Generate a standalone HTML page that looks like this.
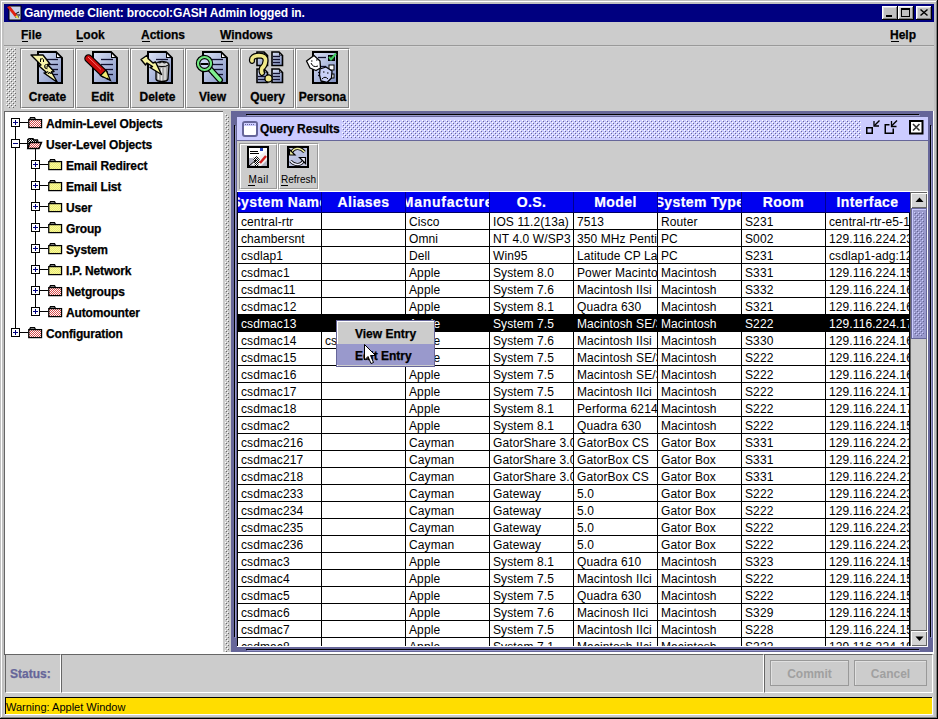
<!DOCTYPE html><html><head><meta charset="utf-8"><title>Ganymede Client</title><style>
*{margin:0;padding:0;box-sizing:border-box}
html,body{width:938px;height:719px;overflow:hidden}
body{position:relative;background:#c0c0c0;font-family:"Liberation Sans",sans-serif}
.a{position:absolute}
.t{white-space:pre;line-height:1}
svg{position:absolute;overflow:visible}
</style></head><body>
<svg width="0" height="0" style="position:absolute"><defs>
<pattern id="bumpG" x="0" y="0" width="4" height="4" patternUnits="userSpaceOnUse">
<rect x="0" y="0" width="1" height="1" fill="#fff"/><rect x="1" y="1" width="1" height="1" fill="#666"/>
<rect x="2" y="2" width="1" height="1" fill="#fff"/><rect x="3" y="3" width="1" height="1" fill="#666"/>
</pattern>
<pattern id="bumpP" x="0" y="0" width="4" height="4" patternUnits="userSpaceOnUse">
<rect x="0" y="0" width="1" height="1" fill="#fff"/><rect x="1" y="1" width="1" height="1" fill="#666699"/>
<rect x="2" y="2" width="1" height="1" fill="#fff"/><rect x="3" y="3" width="1" height="1" fill="#666699"/>
</pattern>
<pattern id="bumpT" x="0" y="0" width="4" height="4" patternUnits="userSpaceOnUse">
<rect x="0" y="0" width="1" height="1" fill="#fff"/><rect x="1" y="1" width="1" height="1" fill="#666699"/>
<rect x="2" y="2" width="1" height="1" fill="#fff"/><rect x="3" y="3" width="1" height="1" fill="#666699"/>
</pattern>
<pattern id="chkR" x="0" y="0" width="2" height="2" patternUnits="userSpaceOnUse"><rect width="2" height="2" fill="#ffffff"/><rect x="0" y="0" width="1" height="1" fill="#d84848"/><rect x="1" y="1" width="1" height="1" fill="#d84848"/></pattern>
<pattern id="chkY" x="0" y="0" width="2" height="2" patternUnits="userSpaceOnUse"><rect width="2" height="2" fill="#f8f8a0"/><rect x="0" y="0" width="1" height="1" fill="#ecec70"/><rect x="1" y="1" width="1" height="1" fill="#ecec70"/></pattern>
<pattern id="chkK" x="0" y="0" width="2" height="2" patternUnits="userSpaceOnUse"><rect width="2" height="2" fill="#ffffff"/><rect x="0" y="0" width="1" height="1" fill="#000"/><rect x="1" y="1" width="1" height="1" fill="#000"/></pattern>
<linearGradient id="docG" x1="0" y1="0" x2="1" y2="1"><stop offset="0" stop-color="#dde4f8"/><stop offset="1" stop-color="#7f8fc0"/></linearGradient>
</defs></svg>
<div class="a" style="left:0px;top:0px;width:937px;height:1px;background:#c0c0c0;"></div>
<div class="a" style="left:1px;top:1px;width:935px;height:1px;background:#ffffff;"></div>
<div class="a" style="left:1px;top:1px;width:1px;height:716px;background:#ffffff;"></div>
<div class="a" style="left:937px;top:0px;width:1px;height:719px;background:#000;"></div>
<div class="a" style="left:936px;top:1px;width:1px;height:717px;background:#808080;"></div>
<div class="a" style="left:0px;top:718px;width:938px;height:1px;background:#000;"></div>
<div class="a" style="left:1px;top:717px;width:936px;height:1px;background:#808080;"></div>
<div class="a" style="left:4px;top:4px;width:930px;height:18px;background:#000080;"></div>
<svg class="a" style="left:6px;top:5px" width="16" height="16">
<rect x="3" y="1" width="12" height="14" fill="#c8d0e8" stroke="#000" stroke-width="1"/>
<path d="M9 9 L13 7 M9 10 L14 10 M9 12 L13 12" stroke="#000" stroke-width="1"/>
<path d="M1 2 L4 1 L11 10 L9 12 Z" fill="#e02010"/>
<path d="M9 12 L11 10 L13 14 Z" fill="#f0e040"/>
</svg>
<div class="a t" style="left:24px;top:7px;font-size:12px;font-weight:700;color:#fff;letter-spacing:-0.15px">Ganymede Client: broccol:GASH Admin logged in.</div>
<div class="a" style="left:882px;top:6px;width:16px;height:14px;background:#c0c0c0;box-shadow:inset -1px -1px #000,inset 1px 1px #fff,inset -2px -2px #808080,inset 2px 2px #dfdfdf"></div>
<div class="a" style="left:886px;top:15px;width:6px;height:2px;background:#000"></div>
<div class="a" style="left:898px;top:6px;width:16px;height:14px;background:#c0c0c0;box-shadow:inset -1px -1px #000,inset 1px 1px #fff,inset -2px -2px #808080,inset 2px 2px #dfdfdf"></div>
<div class="a" style="left:901px;top:8px;width:9px;height:9px;border:1px solid #000;border-top-width:2px"></div>
<div class="a" style="left:916px;top:6px;width:16px;height:14px;background:#c0c0c0;box-shadow:inset -1px -1px #000,inset 1px 1px #fff,inset -2px -2px #808080,inset 2px 2px #dfdfdf"></div>
<svg class="a" style="left:920px;top:9px" width="8" height="7"><path d="M0.5 0.5 L7.5 6.5 M7.5 0.5 L0.5 6.5" stroke="#000" stroke-width="1.5"/></svg>
<div class="a" style="left:4px;top:22px;width:930px;height:695px;background:#cccccc;"></div>
<div class="a" style="left:4px;top:45px;width:930px;height:1px;background:#999999;"></div>
<div class="a" style="left:4px;top:46px;width:930px;height:1px;background:#d4d4d4;"></div>
<div class="a t" style="left:21px;top:29px;font-size:12px;font-weight:700;color:#000;-webkit-text-stroke:0.25px #000;">File</div>
<div class="a" style="left:22px;top:41px;width:6px;height:1px;background:#000;"></div>
<div class="a t" style="left:76px;top:29px;font-size:12px;font-weight:700;color:#000;-webkit-text-stroke:0.25px #000;">Look</div>
<div class="a" style="left:77px;top:41px;width:6px;height:1px;background:#000;"></div>
<div class="a t" style="left:141px;top:29px;font-size:12px;font-weight:700;color:#000;-webkit-text-stroke:0.25px #000;">Actions</div>
<div class="a" style="left:142px;top:41px;width:8px;height:1px;background:#000;"></div>
<div class="a t" style="left:220px;top:29px;font-size:12px;font-weight:700;color:#000;-webkit-text-stroke:0.25px #000;">Windows</div>
<div class="a" style="left:221px;top:41px;width:12px;height:1px;background:#000;"></div>
<div class="a t" style="left:890px;top:29px;font-size:12px;font-weight:700;color:#000;-webkit-text-stroke:0.25px #000;">Help</div>
<div class="a" style="left:891px;top:41px;width:8px;height:1px;background:#000;"></div>
<svg class="a" style="left:6px;top:48px" width="10" height="60"><rect width="10" height="60" fill="url(#bumpG)"/></svg>
<div class="a" style="left:20px;top:48px;width:55px;height:61px;border-left:1px solid #808080;border-top:1px solid #808080;border-right:1px solid #fff;border-bottom:1px solid #fff;"><div style="position:absolute;left:0;top:0;right:0;bottom:0;border-left:1px solid #fff;border-top:1px solid #fff;border-right:1px solid #808080;border-bottom:1px solid #808080"></div></div>
<div class="a t" style="left:20px;top:91px;width:55px;text-align:center;font-size:12px;font-weight:700;-webkit-text-stroke:0.3px #000">Create</div>
<div class="a" style="left:75px;top:48px;width:55px;height:61px;border-left:1px solid #808080;border-top:1px solid #808080;border-right:1px solid #fff;border-bottom:1px solid #fff;"><div style="position:absolute;left:0;top:0;right:0;bottom:0;border-left:1px solid #fff;border-top:1px solid #fff;border-right:1px solid #808080;border-bottom:1px solid #808080"></div></div>
<div class="a t" style="left:75px;top:91px;width:55px;text-align:center;font-size:12px;font-weight:700;-webkit-text-stroke:0.3px #000">Edit</div>
<div class="a" style="left:130px;top:48px;width:55px;height:61px;border-left:1px solid #808080;border-top:1px solid #808080;border-right:1px solid #fff;border-bottom:1px solid #fff;"><div style="position:absolute;left:0;top:0;right:0;bottom:0;border-left:1px solid #fff;border-top:1px solid #fff;border-right:1px solid #808080;border-bottom:1px solid #808080"></div></div>
<div class="a t" style="left:130px;top:91px;width:55px;text-align:center;font-size:12px;font-weight:700;-webkit-text-stroke:0.3px #000">Delete</div>
<div class="a" style="left:185px;top:48px;width:55px;height:61px;border-left:1px solid #808080;border-top:1px solid #808080;border-right:1px solid #fff;border-bottom:1px solid #fff;"><div style="position:absolute;left:0;top:0;right:0;bottom:0;border-left:1px solid #fff;border-top:1px solid #fff;border-right:1px solid #808080;border-bottom:1px solid #808080"></div></div>
<div class="a t" style="left:185px;top:91px;width:55px;text-align:center;font-size:12px;font-weight:700;-webkit-text-stroke:0.3px #000">View</div>
<div class="a" style="left:240px;top:48px;width:55px;height:61px;border-left:1px solid #808080;border-top:1px solid #808080;border-right:1px solid #fff;border-bottom:1px solid #fff;"><div style="position:absolute;left:0;top:0;right:0;bottom:0;border-left:1px solid #fff;border-top:1px solid #fff;border-right:1px solid #808080;border-bottom:1px solid #808080"></div></div>
<div class="a t" style="left:240px;top:91px;width:55px;text-align:center;font-size:12px;font-weight:700;-webkit-text-stroke:0.3px #000">Query</div>
<div class="a" style="left:295px;top:48px;width:55px;height:61px;border-left:1px solid #808080;border-top:1px solid #808080;border-right:1px solid #fff;border-bottom:1px solid #fff;"><div style="position:absolute;left:0;top:0;right:0;bottom:0;border-left:1px solid #fff;border-top:1px solid #fff;border-right:1px solid #808080;border-bottom:1px solid #808080"></div></div>
<div class="a t" style="left:295px;top:91px;width:55px;text-align:center;font-size:12px;font-weight:700;-webkit-text-stroke:0.3px #000">Persona</div>
<svg class="a" style="left:0;top:0" width="938" height="719"><path d="M38 52 H56 L62 58 V83 H38 Z" fill="url(#docG)" stroke="#000" stroke-width="2"/><path d="M56 52 V58 H62 Z" fill="#000"/><path d="M57 54 V57 H60 Z" fill="#fff"/><path d="M46 59.5 H58" stroke="#101030" stroke-width="1.3"/><path d="M46 64.5 H58" stroke="#101030" stroke-width="1.3"/><path d="M46 69.5 H58" stroke="#101030" stroke-width="1.3"/><path d="M46 74.5 H58" stroke="#101030" stroke-width="1.3"/><path d="M31 55 L43 55 L50 64 L47.5 64.5 L54 71.5 L51.5 72 L57.5 82.5 L44 73 L46.5 72.5 L38.5 65.5 L41 65 Z" fill="#f8f4a8" stroke="#000" stroke-width="1.4" stroke-linejoin="round"/><path d="M40.5 58.5 V62 M40.5 59.5 Q42.5 57.5 43.5 59.5 V62" fill="none" stroke="#000" stroke-width="1"/><path d="M44.5 67 H48 Q48 64.5 46.2 64.5 Q44.5 64.5 44.5 66.5 Q44.5 69 47.5 68.8" fill="none" stroke="#000" stroke-width="0.9"/><path d="M47.5 71 L48.5 74 L49.8 72 L51 74 L52 71" fill="none" stroke="#000" stroke-width="0.9"/><path d="M93 52 H111 L117 58 V83 H93 Z" fill="url(#docG)" stroke="#000" stroke-width="2"/><path d="M111 52 V58 H117 Z" fill="#000"/><path d="M112 54 V57 H115 Z" fill="#fff"/><path d="M101 59.5 H113" stroke="#101030" stroke-width="1.3"/><path d="M101 64.5 H113" stroke="#101030" stroke-width="1.3"/><path d="M101 69.5 H113" stroke="#101030" stroke-width="1.3"/><path d="M101 74.5 H113" stroke="#101030" stroke-width="1.3"/><path d="M88.5 58.5 L104 73.5" stroke="#000" stroke-width="8.5" stroke-linecap="round"/><path d="M88.5 58.5 L103 72.5" stroke="#c80808" stroke-width="6" stroke-linecap="round"/><path d="M88 57 L101 69.5" stroke="#ff7070" stroke-width="1"/><path d="M100.5 75.5 L106 70 L110.5 80.5 Z" fill="#f0e870" stroke="#000" stroke-width="1.2"/><path d="M107.5 77.5 L110.5 80.5 L106 79 Z" fill="#000"/><path d="M148 52 H166 L172 58 V83 H148 Z" fill="url(#docG)" stroke="#000" stroke-width="2"/><path d="M166 52 V58 H172 Z" fill="#000"/><path d="M167 54 V57 H170 Z" fill="#fff"/><path d="M156 59.5 H168" stroke="#101030" stroke-width="1.3"/><path d="M156 64.5 H168" stroke="#101030" stroke-width="1.3"/><path d="M156 69.5 H168" stroke="#101030" stroke-width="1.3"/><path d="M156 74.5 H168" stroke="#101030" stroke-width="1.3"/><path d="M156 65 Q155.5 62 162 61.5 Q169 62 169 65 L168 79 Q167.5 81.5 162 81.5 Q156.5 81.5 156 79 Z" fill="#a8a8a8" stroke="#000" stroke-width="1.3"/><path d="M158.5 67 V79.5 M161.5 68 V80.5 M165 67.5 V80" stroke="#e8e8e8" stroke-width="1.3"/><path d="M156 64.5 Q157 61 160 63 Q162 60.5 164 63 Q167 61 169 64.5 Q166 67 162 66.5 Q158 67 156 64.5Z" fill="#d8d8d8" stroke="#000" stroke-width="1"/><path d="M141 59.5 L147.5 55 L148 58.5 L153 63 L155.5 62 L161.5 74.5 L150 67.5 L152.5 66.5 L147 63 L145.5 65 Z" fill="#f8f4a0" stroke="#000" stroke-width="1.4" stroke-linejoin="round"/><path d="M203 52 H221 L227 58 V83 H203 Z" fill="url(#docG)" stroke="#000" stroke-width="2"/><path d="M221 52 V58 H227 Z" fill="#000"/><path d="M222 54 V57 H225 Z" fill="#fff"/><path d="M211 59.5 H223" stroke="#101030" stroke-width="1.3"/><path d="M211 64.5 H223" stroke="#101030" stroke-width="1.3"/><path d="M211 69.5 H223" stroke="#101030" stroke-width="1.3"/><path d="M211 74.5 H223" stroke="#101030" stroke-width="1.3"/><path d="M210 69 L220 80" stroke="#000" stroke-width="6" stroke-linecap="round"/><path d="M210 69 L220 80" stroke="#80f090" stroke-width="3.5" stroke-linecap="round"/><circle cx="204.5" cy="63.5" r="6.5" fill="#ccd4f4" stroke="#000" stroke-width="4.4"/><circle cx="204.5" cy="63.5" r="6.5" fill="none" stroke="#70e880" stroke-width="2.2"/><path d="M200.5 64 H208.5" stroke="#000" stroke-width="2"/><path d="M257 52 H264 L267.5 55.5 V65.5 H257 Z" fill="url(#docG)" stroke="#000" stroke-width="1.6"/><path d="M264 52 V55.5 H267.5Z" fill="#000"/><path d="M264.8 53.5 V54.7 H266Z" fill="#fff"/><path d="M272 52 H279 L282.5 55.5 V65.5 H272 Z" fill="url(#docG)" stroke="#000" stroke-width="1.6"/><path d="M279 52 V55.5 H282.5Z" fill="#000"/><path d="M279.8 53.5 V54.7 H281Z" fill="#fff"/><path d="M257 69 H264 L267.5 72.5 V82.5 H257 Z" fill="url(#docG)" stroke="#000" stroke-width="1.6"/><path d="M264 69 V72.5 H267.5Z" fill="#000"/><path d="M264.8 70.5 V71.7 H266Z" fill="#fff"/><path d="M272 69 H279 L282.5 72.5 V82.5 H272 Z" fill="url(#docG)" stroke="#000" stroke-width="1.6"/><path d="M279 69 V72.5 H282.5Z" fill="#000"/><path d="M279.8 70.5 V71.7 H281Z" fill="#fff"/><path d="M273 56.5 H280" stroke="#101030" stroke-width="1.4"/><path d="M273 59.5 H280" stroke="#101030" stroke-width="1.4"/><path d="M273 62.5 H280" stroke="#101030" stroke-width="1.4"/><path d="M273 73.5 H280" stroke="#101030" stroke-width="1.4"/><path d="M273 76.5 H280" stroke="#101030" stroke-width="1.4"/><path d="M273 79.5 H280" stroke="#101030" stroke-width="1.4"/><path d="M258 76.5 H265" stroke="#101030" stroke-width="1.4"/><path d="M258 79.5 H265" stroke="#101030" stroke-width="1.4"/><path d="M252 61 Q251 56 259 55.5 Q266 55.5 265.5 61 Q265 66 262 68 Q261 71 262 73" fill="none" stroke="#000" stroke-width="6" stroke-linecap="round"/><path d="M252 61 Q251 56 259 55.5 Q266 55.5 265.5 61 Q265 66 262 68 Q261 71 262 73" fill="none" stroke="#f0e888" stroke-width="3.6" stroke-linecap="round"/><circle cx="268.5" cy="78.5" r="3.6" fill="#f0e888" stroke="#000" stroke-width="1.3"/><path d="M313 52 H337 V83 H313 Z" fill="url(#docG)" stroke="#000" stroke-width="2"/><path d="M318 57.5 H326" stroke="#101030" stroke-width="1.3"/><path d="M318 66.5 H326" stroke="#101030" stroke-width="1.3"/><path d="M318 72.5 H326" stroke="#101030" stroke-width="1.3"/><path d="M318 75.5 H326" stroke="#101030" stroke-width="1.3"/><rect x="328.5" y="55.5" width="6" height="5" fill="#102010" stroke="#000"/><path d="M329 57 L331 59.5 L336 53.5" stroke="#40d060" stroke-width="2" fill="none"/><rect x="329" y="65" width="5" height="5" fill="#fff" stroke="#000"/><rect x="331" y="74" width="3" height="4" fill="#fff" stroke="#000"/><path d="M306.5 61 L314 55.5 L320 61 L320.5 68 L316 70.5 L310 68 Z" fill="#fff" stroke="#000" stroke-width="1.3" stroke-linejoin="round"/><path d="M311 63 Q313 68 318 66" stroke="#000" fill="none"/><path d="M311 61 h1.5 M316 60 h1.5" stroke="#000"/><path d="M320 69 L326 67 L332 71 L331.5 78 L327 82.5 L321 81 L319.5 75 Z" fill="#c8d0f8" stroke="#000" stroke-width="1.3" stroke-linejoin="round"/><path d="M322 79 Q325 75.5 328 79" stroke="#000" fill="none"/><path d="M323 72 h1.5 M327 73 h1.5" stroke="#000"/></svg>
<div class="a" style="left:4px;top:111px;width:219px;height:1px;background:#666666;"></div>
<div class="a" style="left:4px;top:111px;width:1px;height:544px;background:#666666;"></div>
<div class="a" style="left:5px;top:112px;width:218px;height:542px;background:#ffffff;"></div>
<div class="a" style="left:15px;top:127px;width:1px;height:206px;background:#000;"></div>
<div class="a" style="left:35px;top:148px;width:1px;height:164px;background:#000;"></div>
<div class="a" style="left:11px;top:118px;width:9px;height:9px;border:1px solid #000;background:#fff"></div>
<div class="a" style="left:13px;top:122px;width:5px;height:1px;background:#000080;"></div>
<div class="a" style="left:15px;top:120px;width:1px;height:5px;background:#000080;"></div>
<div class="a" style="left:20px;top:122px;width:8px;height:1px;background:#000;"></div>
<svg class="a" style="left:28px;top:117px" width="15" height="12"><path d="M1.5 2.5 L2.5 0.75 H6.5 L7.5 2.5" fill="#fff" stroke="#000" stroke-width="1.3"/><rect x="0.75" y="2.6" width="12.8" height="8" fill="url(#chkR)" stroke="#000" stroke-width="1.25"/></svg>
<div class="a t" style="left:46px;top:118px;font-size:12px;font-weight:700;color:#000;-webkit-text-stroke:0.25px #000;letter-spacing:-0.15px">Admin-Level Objects</div>
<div class="a" style="left:11px;top:139px;width:9px;height:9px;border:1px solid #000;background:#fff"></div>
<div class="a" style="left:13px;top:143px;width:5px;height:1px;background:#000080;"></div>
<div class="a" style="left:20px;top:143px;width:8px;height:1px;background:#000;"></div>
<svg class="a" style="left:27px;top:138px" width="16" height="12"><path d="M0.75 10.5 V1.5 L2 0.75 H6 L7 2 H10.5 L11 4" fill="url(#chkK)" stroke="#000" stroke-width="1.3"/><path d="M0.75 10.5 L3 4.5 H14.5 L12 10.5 Z" fill="url(#chkR)" stroke="#000" stroke-width="1.4"/></svg>
<div class="a t" style="left:46px;top:139px;font-size:12px;font-weight:700;color:#000;-webkit-text-stroke:0.25px #000;letter-spacing:-0.15px">User-Level Objects</div>
<div class="a" style="left:31px;top:160px;width:9px;height:9px;border:1px solid #000;background:#fff"></div>
<div class="a" style="left:33px;top:164px;width:5px;height:1px;background:#000080;"></div>
<div class="a" style="left:35px;top:162px;width:1px;height:5px;background:#000080;"></div>
<div class="a" style="left:40px;top:164px;width:8px;height:1px;background:#000;"></div>
<svg class="a" style="left:48px;top:159px" width="15" height="12"><path d="M1.5 2.5 L2.5 0.75 H6.5 L7.5 2.5" fill="#fff" stroke="#000" stroke-width="1.3"/><rect x="0.75" y="2.6" width="12.8" height="8" fill="url(#chkY)" stroke="#000" stroke-width="1.25"/></svg>
<div class="a t" style="left:66px;top:160px;font-size:12px;font-weight:700;color:#000;-webkit-text-stroke:0.25px #000;letter-spacing:-0.15px">Email Redirect</div>
<div class="a" style="left:31px;top:181px;width:9px;height:9px;border:1px solid #000;background:#fff"></div>
<div class="a" style="left:33px;top:185px;width:5px;height:1px;background:#000080;"></div>
<div class="a" style="left:35px;top:183px;width:1px;height:5px;background:#000080;"></div>
<div class="a" style="left:40px;top:185px;width:8px;height:1px;background:#000;"></div>
<svg class="a" style="left:48px;top:180px" width="15" height="12"><path d="M1.5 2.5 L2.5 0.75 H6.5 L7.5 2.5" fill="#fff" stroke="#000" stroke-width="1.3"/><rect x="0.75" y="2.6" width="12.8" height="8" fill="url(#chkY)" stroke="#000" stroke-width="1.25"/></svg>
<div class="a t" style="left:66px;top:181px;font-size:12px;font-weight:700;color:#000;-webkit-text-stroke:0.25px #000;letter-spacing:-0.15px">Email List</div>
<div class="a" style="left:31px;top:202px;width:9px;height:9px;border:1px solid #000;background:#fff"></div>
<div class="a" style="left:33px;top:206px;width:5px;height:1px;background:#000080;"></div>
<div class="a" style="left:35px;top:204px;width:1px;height:5px;background:#000080;"></div>
<div class="a" style="left:40px;top:206px;width:8px;height:1px;background:#000;"></div>
<svg class="a" style="left:48px;top:201px" width="15" height="12"><path d="M1.5 2.5 L2.5 0.75 H6.5 L7.5 2.5" fill="#fff" stroke="#000" stroke-width="1.3"/><rect x="0.75" y="2.6" width="12.8" height="8" fill="url(#chkY)" stroke="#000" stroke-width="1.25"/></svg>
<div class="a t" style="left:66px;top:202px;font-size:12px;font-weight:700;color:#000;-webkit-text-stroke:0.25px #000;letter-spacing:-0.15px">User</div>
<div class="a" style="left:31px;top:223px;width:9px;height:9px;border:1px solid #000;background:#fff"></div>
<div class="a" style="left:33px;top:227px;width:5px;height:1px;background:#000080;"></div>
<div class="a" style="left:35px;top:225px;width:1px;height:5px;background:#000080;"></div>
<div class="a" style="left:40px;top:227px;width:8px;height:1px;background:#000;"></div>
<svg class="a" style="left:48px;top:222px" width="15" height="12"><path d="M1.5 2.5 L2.5 0.75 H6.5 L7.5 2.5" fill="#fff" stroke="#000" stroke-width="1.3"/><rect x="0.75" y="2.6" width="12.8" height="8" fill="url(#chkY)" stroke="#000" stroke-width="1.25"/></svg>
<div class="a t" style="left:66px;top:223px;font-size:12px;font-weight:700;color:#000;-webkit-text-stroke:0.25px #000;letter-spacing:-0.15px">Group</div>
<div class="a" style="left:31px;top:244px;width:9px;height:9px;border:1px solid #000;background:#fff"></div>
<div class="a" style="left:33px;top:248px;width:5px;height:1px;background:#000080;"></div>
<div class="a" style="left:35px;top:246px;width:1px;height:5px;background:#000080;"></div>
<div class="a" style="left:40px;top:248px;width:8px;height:1px;background:#000;"></div>
<svg class="a" style="left:48px;top:243px" width="15" height="12"><path d="M1.5 2.5 L2.5 0.75 H6.5 L7.5 2.5" fill="#fff" stroke="#000" stroke-width="1.3"/><rect x="0.75" y="2.6" width="12.8" height="8" fill="url(#chkY)" stroke="#000" stroke-width="1.25"/></svg>
<div class="a t" style="left:66px;top:244px;font-size:12px;font-weight:700;color:#000;-webkit-text-stroke:0.25px #000;letter-spacing:-0.15px">System</div>
<div class="a" style="left:31px;top:265px;width:9px;height:9px;border:1px solid #000;background:#fff"></div>
<div class="a" style="left:33px;top:269px;width:5px;height:1px;background:#000080;"></div>
<div class="a" style="left:35px;top:267px;width:1px;height:5px;background:#000080;"></div>
<div class="a" style="left:40px;top:269px;width:8px;height:1px;background:#000;"></div>
<svg class="a" style="left:48px;top:264px" width="15" height="12"><path d="M1.5 2.5 L2.5 0.75 H6.5 L7.5 2.5" fill="#fff" stroke="#000" stroke-width="1.3"/><rect x="0.75" y="2.6" width="12.8" height="8" fill="url(#chkY)" stroke="#000" stroke-width="1.25"/></svg>
<div class="a t" style="left:66px;top:265px;font-size:12px;font-weight:700;color:#000;-webkit-text-stroke:0.25px #000;letter-spacing:-0.15px">I.P. Network</div>
<div class="a" style="left:31px;top:286px;width:9px;height:9px;border:1px solid #000;background:#fff"></div>
<div class="a" style="left:33px;top:290px;width:5px;height:1px;background:#000080;"></div>
<div class="a" style="left:35px;top:288px;width:1px;height:5px;background:#000080;"></div>
<div class="a" style="left:40px;top:290px;width:8px;height:1px;background:#000;"></div>
<svg class="a" style="left:48px;top:285px" width="15" height="12"><path d="M1.5 2.5 L2.5 0.75 H6.5 L7.5 2.5" fill="#fff" stroke="#000" stroke-width="1.3"/><rect x="0.75" y="2.6" width="12.8" height="8" fill="url(#chkR)" stroke="#000" stroke-width="1.25"/></svg>
<div class="a t" style="left:66px;top:286px;font-size:12px;font-weight:700;color:#000;-webkit-text-stroke:0.25px #000;letter-spacing:-0.15px">Netgroups</div>
<div class="a" style="left:31px;top:307px;width:9px;height:9px;border:1px solid #000;background:#fff"></div>
<div class="a" style="left:33px;top:311px;width:5px;height:1px;background:#000080;"></div>
<div class="a" style="left:35px;top:309px;width:1px;height:5px;background:#000080;"></div>
<div class="a" style="left:40px;top:311px;width:8px;height:1px;background:#000;"></div>
<svg class="a" style="left:48px;top:306px" width="15" height="12"><path d="M1.5 2.5 L2.5 0.75 H6.5 L7.5 2.5" fill="#fff" stroke="#000" stroke-width="1.3"/><rect x="0.75" y="2.6" width="12.8" height="8" fill="url(#chkR)" stroke="#000" stroke-width="1.25"/></svg>
<div class="a t" style="left:66px;top:307px;font-size:12px;font-weight:700;color:#000;-webkit-text-stroke:0.25px #000;letter-spacing:-0.15px">Automounter</div>
<div class="a" style="left:11px;top:328px;width:9px;height:9px;border:1px solid #000;background:#fff"></div>
<div class="a" style="left:13px;top:332px;width:5px;height:1px;background:#000080;"></div>
<div class="a" style="left:15px;top:330px;width:1px;height:5px;background:#000080;"></div>
<div class="a" style="left:20px;top:332px;width:8px;height:1px;background:#000;"></div>
<svg class="a" style="left:28px;top:327px" width="15" height="12"><path d="M1.5 2.5 L2.5 0.75 H6.5 L7.5 2.5" fill="#fff" stroke="#000" stroke-width="1.3"/><rect x="0.75" y="2.6" width="12.8" height="8" fill="url(#chkR)" stroke="#000" stroke-width="1.25"/></svg>
<div class="a t" style="left:46px;top:328px;font-size:12px;font-weight:700;color:#000;-webkit-text-stroke:0.25px #000;letter-spacing:-0.15px">Configuration</div>
<svg class="a" style="left:225px;top:114px" width="4" height="538"><rect width="4" height="538" fill="url(#bumpG)"/></svg>
<div class="a" style="left:231px;top:111px;width:702px;height:541px;background:#666699;"></div>
<div class="a" style="left:232px;top:114px;width:1px;height:0px;background:#666699;"></div>
<div class="a" style="left:246px;top:114px;width:673px;height:1px;background:#000;"></div>
<div class="a" style="left:247px;top:115px;width:673px;height:1px;background:#9999cc;"></div>
<div class="a" style="left:234px;top:125px;width:1px;height:512px;background:#000;"></div>
<div class="a" style="left:235px;top:126px;width:1px;height:512px;background:#9999cc;"></div>
<div class="a" style="left:930px;top:125px;width:1px;height:512px;background:#000;"></div>
<div class="a" style="left:931px;top:126px;width:1px;height:512px;background:#9999cc;"></div>
<div class="a" style="left:246px;top:649px;width:673px;height:1px;background:#000;"></div>
<div class="a" style="left:247px;top:650px;width:673px;height:1px;background:#9999cc;"></div>
<div class="a" style="left:237px;top:117px;width:691px;height:530px;background:#cccccc;"></div>
<div class="a" style="left:237px;top:117px;width:691px;height:23px;background:#ccccff;"></div>
<div class="a" style="left:237px;top:140px;width:691px;height:1px;background:#666699;"></div>
<svg class="a" style="left:242px;top:121px" width="16" height="16"><rect x="1" y="1" width="14" height="14" rx="2" fill="#fff" stroke="#666699" stroke-width="2"/><rect x="2" y="2" width="12" height="3" fill="#ccccff"/><path d="M3 3.5h10" stroke="#666699" stroke-dasharray="1 1"/></svg>
<div class="a t" style="left:260px;top:123px;font-size:12px;font-weight:700;color:#000;-webkit-text-stroke:0.25px #000;letter-spacing:-0.15px">Query Results</div>
<svg class="a" style="left:342px;top:120px" width="519" height="18"><rect width="519" height="18" fill="url(#bumpT)"/></svg>
<svg class="a" style="left:0;top:0" width="938" height="719">
<rect x="866.75" y="127.75" width="5.5" height="5.5" fill="none" stroke="#000" stroke-width="1.5"/>
<path d="M879.5 120.5 L874.5 125.5" stroke="#000" stroke-width="1.5"/><path d="M874 121 V126 H879" stroke="#000" stroke-width="1.3" fill="none"/>
<path d="M889.5 124.75 H885.25 V133.25 H893.25 V128.5" stroke="#000" stroke-width="1.5" fill="none"/>
<path d="M897 120.5 L891.5 126" stroke="#000" stroke-width="1.5"/><path d="M891.5 121 V126.5 H896.5" stroke="#000" stroke-width="1.3" fill="none"/>
<rect x="910" y="121" width="12.5" height="12.5" fill="#fff" stroke="#000" stroke-width="2"/>
<path d="M913 124 L919.5 130.5 M919.5 124 L913 130.5" stroke="#333" stroke-width="1.6"/>
</svg>
<div class="a" style="left:239px;top:143px;width:39px;height:47px;border-left:1px solid #999;border-top:1px solid #999;border-right:1px solid #fff;border-bottom:1px solid #fff;"><div style="position:absolute;left:0;top:0;right:0;bottom:0;border-left:1px solid #fff;border-top:1px solid #fff;border-right:1px solid #999;border-bottom:1px solid #999"></div></div>
<svg class="a" style="left:0;top:0" width="938" height="719">
<rect x="248" y="147" width="20" height="20" fill="#fff" stroke="#000" stroke-width="2"/>
<rect x="249" y="158" width="18" height="8" fill="#b0b0c0"/>
<path d="M250 151.5 H258 M250 153.5 H259" stroke="#000" stroke-width="1.2"/>
<rect x="260" y="148" width="3" height="3" fill="#2040c0"/>
<path d="M251 165 L256 158 L262 154 L267 150 L267 160 L261 166 Z" fill="#f0f0f0"/>
<path d="M253 158 L257 156 L260 160 L258 166 L255 166 Z" fill="url(#chkK)"/>
<path d="M266 156 L260 163" stroke="#d02020" stroke-width="2.5"/>
<path d="M249 166 L256 160" stroke="#000" stroke-width="1"/>
</svg>
<div class="a t" style="left:239px;top:175px;width:39px;text-align:center;font-size:10px;font-weight:400;letter-spacing:0.45px">Mail</div>
<div class="a" style="left:248px;top:185px;width:7px;height:1px;background:#000;"></div>
<div class="a" style="left:278px;top:143px;width:41px;height:47px;border-left:1px solid #999;border-top:1px solid #999;border-right:1px solid #fff;border-bottom:1px solid #fff;"><div style="position:absolute;left:0;top:0;right:0;bottom:0;border-left:1px solid #fff;border-top:1px solid #fff;border-right:1px solid #999;border-bottom:1px solid #999"></div></div>
<svg class="a" style="left:0;top:0" width="938" height="719">
<defs><linearGradient id="rfG" x1="0" y1="0" x2="1" y2="1"><stop offset="0" stop-color="#d8d8f0"/><stop offset="0.5" stop-color="#b8c0e0"/><stop offset="1" stop-color="#c8c8d8"/></linearGradient></defs>
<rect x="288" y="147" width="20" height="20" fill="url(#rfG)" stroke="#000" stroke-width="2"/>
<path d="M304.5 152 Q301 148 297 148.5 Q293 149 292 152" fill="none" stroke="#000" stroke-width="3.2"/>
<path d="M304.5 152 Q301 148 297 148.5 Q293 149 292 152" fill="none" stroke="#f0f0a0" stroke-width="1.4"/>
<path d="M289.5 149.5 V155 H295 Z" fill="#f0f0a0" stroke="#000" stroke-width="1.2"/>
<path d="M290.5 161 Q294 165 298 164.5 Q302 164 303 161" fill="none" stroke="#000" stroke-width="3.2"/>
<path d="M290.5 161 Q294 165 298 164.5 Q302 164 303 161" fill="none" stroke="#f0f0ff" stroke-width="1.4"/>
<path d="M305.5 163.5 V157.5 H299.5 Z" fill="#f0f0ff" stroke="#000" stroke-width="1.2"/>
</svg>
<div class="a t" style="left:278px;top:175px;width:41px;text-align:center;font-size:10px;font-weight:400;letter-spacing:0.0px">Refresh</div>
<div class="a" style="left:281px;top:185px;width:7px;height:1px;background:#000;"></div>
<div class="a" style="left:237px;top:191px;width:691px;height:1px;background:#ffffff;"></div>
<div class="a" style="left:237px;top:192px;width:674px;height:21px;background:#0000f0;"></div>
<div class="a" style="left:237px;top:212px;width:674px;height:1px;background:#000060;"></div>
<div class="a" style="left:238px;top:192px;width:83px;height:20px;overflow:hidden"><div class="t" style="position:absolute;left:-40px;right:-40px;top:3px;text-align:center;font-size:14px;font-weight:700;color:#fff;-webkit-text-stroke:0.2px #fff;letter-spacing:0.4px">System Name</div></div>
<div class="a" style="left:321px;top:192px;width:1px;height:20px;background:#000090;"></div>
<div class="a" style="left:322px;top:192px;width:83px;height:20px;overflow:hidden"><div class="t" style="position:absolute;left:-40px;right:-40px;top:3px;text-align:center;font-size:14px;font-weight:700;color:#fff;-webkit-text-stroke:0.2px #fff;letter-spacing:0.4px">Aliases</div></div>
<div class="a" style="left:405px;top:192px;width:1px;height:20px;background:#000090;"></div>
<div class="a" style="left:406px;top:192px;width:83px;height:20px;overflow:hidden"><div class="t" style="position:absolute;left:-40px;right:-40px;top:3px;text-align:center;font-size:14px;font-weight:700;color:#fff;-webkit-text-stroke:0.2px #fff;letter-spacing:0.75px">Manufacture</div></div>
<div class="a" style="left:489px;top:192px;width:1px;height:20px;background:#000090;"></div>
<div class="a" style="left:490px;top:192px;width:83px;height:20px;overflow:hidden"><div class="t" style="position:absolute;left:-40px;right:-40px;top:3px;text-align:center;font-size:14px;font-weight:700;color:#fff;-webkit-text-stroke:0.2px #fff;letter-spacing:0.4px">O.S.</div></div>
<div class="a" style="left:573px;top:192px;width:1px;height:20px;background:#000090;"></div>
<div class="a" style="left:574px;top:192px;width:83px;height:20px;overflow:hidden"><div class="t" style="position:absolute;left:-40px;right:-40px;top:3px;text-align:center;font-size:14px;font-weight:700;color:#fff;-webkit-text-stroke:0.2px #fff;letter-spacing:0.4px">Model</div></div>
<div class="a" style="left:657px;top:192px;width:1px;height:20px;background:#000090;"></div>
<div class="a" style="left:658px;top:192px;width:83px;height:20px;overflow:hidden"><div class="t" style="position:absolute;left:-40px;right:-40px;top:3px;text-align:center;font-size:14px;font-weight:700;color:#fff;-webkit-text-stroke:0.2px #fff;letter-spacing:0.4px">System Type</div></div>
<div class="a" style="left:741px;top:192px;width:1px;height:20px;background:#000090;"></div>
<div class="a" style="left:742px;top:192px;width:83px;height:20px;overflow:hidden"><div class="t" style="position:absolute;left:-40px;right:-40px;top:3px;text-align:center;font-size:14px;font-weight:700;color:#fff;-webkit-text-stroke:0.2px #fff;letter-spacing:0.4px">Room</div></div>
<div class="a" style="left:825px;top:192px;width:1px;height:20px;background:#000090;"></div>
<div class="a" style="left:826px;top:192px;width:83px;height:20px;overflow:hidden"><div class="t" style="position:absolute;left:-40px;right:-40px;top:3px;text-align:center;font-size:14px;font-weight:700;color:#fff;-webkit-text-stroke:0.2px #fff;letter-spacing:0.4px">Interface</div></div>
<div class="a" style="left:910px;top:192px;width:1px;height:21px;background:#000060;"></div>
<div class="a" style="left:237px;top:192px;width:1px;height:21px;background:#000040;"></div>
<div class="a" style="left:237px;top:213px;width:673px;height:433px;overflow:hidden;background:#fff">
<div class="a" style="left:1px;top:0px;width:83px;height:16px;overflow:hidden"><div class="t" style="position:absolute;left:3px;top:3px;font-size:12px;color:#000;letter-spacing:0.1px">central-rtr</div></div>
<div class="a" style="left:169px;top:0px;width:83px;height:16px;overflow:hidden"><div class="t" style="position:absolute;left:3px;top:3px;font-size:12px;color:#000;letter-spacing:0.1px">Cisco</div></div>
<div class="a" style="left:253px;top:0px;width:83px;height:16px;overflow:hidden"><div class="t" style="position:absolute;left:3px;top:3px;font-size:12px;color:#000;letter-spacing:0.1px">IOS 11.2(13a)</div></div>
<div class="a" style="left:337px;top:0px;width:83px;height:16px;overflow:hidden"><div class="t" style="position:absolute;left:3px;top:3px;font-size:12px;color:#000;letter-spacing:0.1px">7513</div></div>
<div class="a" style="left:421px;top:0px;width:83px;height:16px;overflow:hidden"><div class="t" style="position:absolute;left:3px;top:3px;font-size:12px;color:#000;letter-spacing:0.1px">Router</div></div>
<div class="a" style="left:505px;top:0px;width:83px;height:16px;overflow:hidden"><div class="t" style="position:absolute;left:3px;top:3px;font-size:12px;color:#000;letter-spacing:0.1px">S231</div></div>
<div class="a" style="left:589px;top:0px;width:83px;height:16px;overflow:hidden"><div class="t" style="position:absolute;left:3px;top:3px;font-size:12px;color:#000;letter-spacing:0.1px">central-rtr-e5-1</div></div>
<div class="a" style="left:0;top:16px;width:673px;height:1px;background:#000"></div>
<div class="a" style="left:1px;top:17px;width:83px;height:16px;overflow:hidden"><div class="t" style="position:absolute;left:3px;top:3px;font-size:12px;color:#000;letter-spacing:0.1px">chambersnt</div></div>
<div class="a" style="left:169px;top:17px;width:83px;height:16px;overflow:hidden"><div class="t" style="position:absolute;left:3px;top:3px;font-size:12px;color:#000;letter-spacing:0.1px">Omni</div></div>
<div class="a" style="left:253px;top:17px;width:83px;height:16px;overflow:hidden"><div class="t" style="position:absolute;left:3px;top:3px;font-size:12px;color:#000;letter-spacing:0.1px">NT 4.0 W/SP3</div></div>
<div class="a" style="left:337px;top:17px;width:83px;height:16px;overflow:hidden"><div class="t" style="position:absolute;left:3px;top:3px;font-size:12px;color:#000;letter-spacing:0.1px">350 MHz Pentium</div></div>
<div class="a" style="left:421px;top:17px;width:83px;height:16px;overflow:hidden"><div class="t" style="position:absolute;left:3px;top:3px;font-size:12px;color:#000;letter-spacing:0.1px">PC</div></div>
<div class="a" style="left:505px;top:17px;width:83px;height:16px;overflow:hidden"><div class="t" style="position:absolute;left:3px;top:3px;font-size:12px;color:#000;letter-spacing:0.1px">S002</div></div>
<div class="a" style="left:589px;top:17px;width:83px;height:16px;overflow:hidden"><div class="t" style="position:absolute;left:3px;top:3px;font-size:12px;color:#000;letter-spacing:0.1px">129.116.224.23</div></div>
<div class="a" style="left:0;top:33px;width:673px;height:1px;background:#000"></div>
<div class="a" style="left:1px;top:34px;width:83px;height:16px;overflow:hidden"><div class="t" style="position:absolute;left:3px;top:3px;font-size:12px;color:#000;letter-spacing:0.1px">csdlap1</div></div>
<div class="a" style="left:169px;top:34px;width:83px;height:16px;overflow:hidden"><div class="t" style="position:absolute;left:3px;top:3px;font-size:12px;color:#000;letter-spacing:0.1px">Dell</div></div>
<div class="a" style="left:253px;top:34px;width:83px;height:16px;overflow:hidden"><div class="t" style="position:absolute;left:3px;top:3px;font-size:12px;color:#000;letter-spacing:0.1px">Win95</div></div>
<div class="a" style="left:337px;top:34px;width:83px;height:16px;overflow:hidden"><div class="t" style="position:absolute;left:3px;top:3px;font-size:12px;color:#000;letter-spacing:0.1px">Latitude CP Laptop</div></div>
<div class="a" style="left:421px;top:34px;width:83px;height:16px;overflow:hidden"><div class="t" style="position:absolute;left:3px;top:3px;font-size:12px;color:#000;letter-spacing:0.1px">PC</div></div>
<div class="a" style="left:505px;top:34px;width:83px;height:16px;overflow:hidden"><div class="t" style="position:absolute;left:3px;top:3px;font-size:12px;color:#000;letter-spacing:0.1px">S231</div></div>
<div class="a" style="left:589px;top:34px;width:83px;height:16px;overflow:hidden"><div class="t" style="position:absolute;left:3px;top:3px;font-size:12px;color:#000;letter-spacing:0.1px">csdlap1-adg:129</div></div>
<div class="a" style="left:0;top:50px;width:673px;height:1px;background:#000"></div>
<div class="a" style="left:1px;top:51px;width:83px;height:16px;overflow:hidden"><div class="t" style="position:absolute;left:3px;top:3px;font-size:12px;color:#000;letter-spacing:0.1px">csdmac1</div></div>
<div class="a" style="left:169px;top:51px;width:83px;height:16px;overflow:hidden"><div class="t" style="position:absolute;left:3px;top:3px;font-size:12px;color:#000;letter-spacing:0.1px">Apple</div></div>
<div class="a" style="left:253px;top:51px;width:83px;height:16px;overflow:hidden"><div class="t" style="position:absolute;left:3px;top:3px;font-size:12px;color:#000;letter-spacing:0.1px">System 8.0</div></div>
<div class="a" style="left:337px;top:51px;width:83px;height:16px;overflow:hidden"><div class="t" style="position:absolute;left:3px;top:3px;font-size:12px;color:#000;letter-spacing:0.1px">Power Macintosh</div></div>
<div class="a" style="left:421px;top:51px;width:83px;height:16px;overflow:hidden"><div class="t" style="position:absolute;left:3px;top:3px;font-size:12px;color:#000;letter-spacing:0.1px">Macintosh</div></div>
<div class="a" style="left:505px;top:51px;width:83px;height:16px;overflow:hidden"><div class="t" style="position:absolute;left:3px;top:3px;font-size:12px;color:#000;letter-spacing:0.1px">S331</div></div>
<div class="a" style="left:589px;top:51px;width:83px;height:16px;overflow:hidden"><div class="t" style="position:absolute;left:3px;top:3px;font-size:12px;color:#000;letter-spacing:0.1px">129.116.224.15</div></div>
<div class="a" style="left:0;top:67px;width:673px;height:1px;background:#000"></div>
<div class="a" style="left:1px;top:68px;width:83px;height:16px;overflow:hidden"><div class="t" style="position:absolute;left:3px;top:3px;font-size:12px;color:#000;letter-spacing:0.1px">csdmac11</div></div>
<div class="a" style="left:169px;top:68px;width:83px;height:16px;overflow:hidden"><div class="t" style="position:absolute;left:3px;top:3px;font-size:12px;color:#000;letter-spacing:0.1px">Apple</div></div>
<div class="a" style="left:253px;top:68px;width:83px;height:16px;overflow:hidden"><div class="t" style="position:absolute;left:3px;top:3px;font-size:12px;color:#000;letter-spacing:0.1px">System 7.6</div></div>
<div class="a" style="left:337px;top:68px;width:83px;height:16px;overflow:hidden"><div class="t" style="position:absolute;left:3px;top:3px;font-size:12px;color:#000;letter-spacing:0.1px">Macintosh IIsi</div></div>
<div class="a" style="left:421px;top:68px;width:83px;height:16px;overflow:hidden"><div class="t" style="position:absolute;left:3px;top:3px;font-size:12px;color:#000;letter-spacing:0.1px">Macintosh</div></div>
<div class="a" style="left:505px;top:68px;width:83px;height:16px;overflow:hidden"><div class="t" style="position:absolute;left:3px;top:3px;font-size:12px;color:#000;letter-spacing:0.1px">S332</div></div>
<div class="a" style="left:589px;top:68px;width:83px;height:16px;overflow:hidden"><div class="t" style="position:absolute;left:3px;top:3px;font-size:12px;color:#000;letter-spacing:0.1px">129.116.224.16</div></div>
<div class="a" style="left:0;top:84px;width:673px;height:1px;background:#000"></div>
<div class="a" style="left:1px;top:85px;width:83px;height:16px;overflow:hidden"><div class="t" style="position:absolute;left:3px;top:3px;font-size:12px;color:#000;letter-spacing:0.1px">csdmac12</div></div>
<div class="a" style="left:169px;top:85px;width:83px;height:16px;overflow:hidden"><div class="t" style="position:absolute;left:3px;top:3px;font-size:12px;color:#000;letter-spacing:0.1px">Apple</div></div>
<div class="a" style="left:253px;top:85px;width:83px;height:16px;overflow:hidden"><div class="t" style="position:absolute;left:3px;top:3px;font-size:12px;color:#000;letter-spacing:0.1px">System 8.1</div></div>
<div class="a" style="left:337px;top:85px;width:83px;height:16px;overflow:hidden"><div class="t" style="position:absolute;left:3px;top:3px;font-size:12px;color:#000;letter-spacing:0.1px">Quadra 630</div></div>
<div class="a" style="left:421px;top:85px;width:83px;height:16px;overflow:hidden"><div class="t" style="position:absolute;left:3px;top:3px;font-size:12px;color:#000;letter-spacing:0.1px">Macintosh</div></div>
<div class="a" style="left:505px;top:85px;width:83px;height:16px;overflow:hidden"><div class="t" style="position:absolute;left:3px;top:3px;font-size:12px;color:#000;letter-spacing:0.1px">S321</div></div>
<div class="a" style="left:589px;top:85px;width:83px;height:16px;overflow:hidden"><div class="t" style="position:absolute;left:3px;top:3px;font-size:12px;color:#000;letter-spacing:0.1px">129.116.224.16</div></div>
<div class="a" style="left:0;top:101px;width:673px;height:1px;background:#000"></div>
<div class="a" style="left:0;top:102px;width:673px;height:17px;background:#000"></div>
<div class="a" style="left:1px;top:102px;width:83px;height:16px;overflow:hidden"><div class="t" style="position:absolute;left:3px;top:3px;font-size:12px;color:#fff;letter-spacing:0.1px">csdmac13</div></div>
<div class="a" style="left:169px;top:102px;width:83px;height:16px;overflow:hidden"><div class="t" style="position:absolute;left:3px;top:3px;font-size:12px;color:#fff;letter-spacing:0.1px">Apple</div></div>
<div class="a" style="left:253px;top:102px;width:83px;height:16px;overflow:hidden"><div class="t" style="position:absolute;left:3px;top:3px;font-size:12px;color:#fff;letter-spacing:0.1px">System 7.5</div></div>
<div class="a" style="left:337px;top:102px;width:83px;height:16px;overflow:hidden"><div class="t" style="position:absolute;left:3px;top:3px;font-size:12px;color:#fff;letter-spacing:0.1px">Macintosh SE/30</div></div>
<div class="a" style="left:421px;top:102px;width:83px;height:16px;overflow:hidden"><div class="t" style="position:absolute;left:3px;top:3px;font-size:12px;color:#fff;letter-spacing:0.1px">Macintosh</div></div>
<div class="a" style="left:505px;top:102px;width:83px;height:16px;overflow:hidden"><div class="t" style="position:absolute;left:3px;top:3px;font-size:12px;color:#fff;letter-spacing:0.1px">S222</div></div>
<div class="a" style="left:589px;top:102px;width:83px;height:16px;overflow:hidden"><div class="t" style="position:absolute;left:3px;top:3px;font-size:12px;color:#fff;letter-spacing:0.1px">129.116.224.17</div></div>
<div class="a" style="left:0;top:118px;width:673px;height:1px;background:#000"></div>
<div class="a" style="left:1px;top:119px;width:83px;height:16px;overflow:hidden"><div class="t" style="position:absolute;left:3px;top:3px;font-size:12px;color:#000;letter-spacing:0.1px">csdmac14</div></div>
<div class="a" style="left:85px;top:119px;width:83px;height:16px;overflow:hidden"><div class="t" style="position:absolute;left:3px;top:3px;font-size:12px;color:#000;letter-spacing:0.1px">csdmac</div></div>
<div class="a" style="left:169px;top:119px;width:83px;height:16px;overflow:hidden"><div class="t" style="position:absolute;left:3px;top:3px;font-size:12px;color:#000;letter-spacing:0.1px">Apple</div></div>
<div class="a" style="left:253px;top:119px;width:83px;height:16px;overflow:hidden"><div class="t" style="position:absolute;left:3px;top:3px;font-size:12px;color:#000;letter-spacing:0.1px">System 7.6</div></div>
<div class="a" style="left:337px;top:119px;width:83px;height:16px;overflow:hidden"><div class="t" style="position:absolute;left:3px;top:3px;font-size:12px;color:#000;letter-spacing:0.1px">Macintosh IIsi</div></div>
<div class="a" style="left:421px;top:119px;width:83px;height:16px;overflow:hidden"><div class="t" style="position:absolute;left:3px;top:3px;font-size:12px;color:#000;letter-spacing:0.1px">Macintosh</div></div>
<div class="a" style="left:505px;top:119px;width:83px;height:16px;overflow:hidden"><div class="t" style="position:absolute;left:3px;top:3px;font-size:12px;color:#000;letter-spacing:0.1px">S330</div></div>
<div class="a" style="left:589px;top:119px;width:83px;height:16px;overflow:hidden"><div class="t" style="position:absolute;left:3px;top:3px;font-size:12px;color:#000;letter-spacing:0.1px">129.116.224.16</div></div>
<div class="a" style="left:0;top:135px;width:673px;height:1px;background:#000"></div>
<div class="a" style="left:1px;top:136px;width:83px;height:16px;overflow:hidden"><div class="t" style="position:absolute;left:3px;top:3px;font-size:12px;color:#000;letter-spacing:0.1px">csdmac15</div></div>
<div class="a" style="left:169px;top:136px;width:83px;height:16px;overflow:hidden"><div class="t" style="position:absolute;left:3px;top:3px;font-size:12px;color:#000;letter-spacing:0.1px">Apple</div></div>
<div class="a" style="left:253px;top:136px;width:83px;height:16px;overflow:hidden"><div class="t" style="position:absolute;left:3px;top:3px;font-size:12px;color:#000;letter-spacing:0.1px">System 7.5</div></div>
<div class="a" style="left:337px;top:136px;width:83px;height:16px;overflow:hidden"><div class="t" style="position:absolute;left:3px;top:3px;font-size:12px;color:#000;letter-spacing:0.1px">Macintosh SE/30</div></div>
<div class="a" style="left:421px;top:136px;width:83px;height:16px;overflow:hidden"><div class="t" style="position:absolute;left:3px;top:3px;font-size:12px;color:#000;letter-spacing:0.1px">Macintosh</div></div>
<div class="a" style="left:505px;top:136px;width:83px;height:16px;overflow:hidden"><div class="t" style="position:absolute;left:3px;top:3px;font-size:12px;color:#000;letter-spacing:0.1px">S222</div></div>
<div class="a" style="left:589px;top:136px;width:83px;height:16px;overflow:hidden"><div class="t" style="position:absolute;left:3px;top:3px;font-size:12px;color:#000;letter-spacing:0.1px">129.116.224.16</div></div>
<div class="a" style="left:0;top:152px;width:673px;height:1px;background:#000"></div>
<div class="a" style="left:1px;top:153px;width:83px;height:16px;overflow:hidden"><div class="t" style="position:absolute;left:3px;top:3px;font-size:12px;color:#000;letter-spacing:0.1px">csdmac16</div></div>
<div class="a" style="left:169px;top:153px;width:83px;height:16px;overflow:hidden"><div class="t" style="position:absolute;left:3px;top:3px;font-size:12px;color:#000;letter-spacing:0.1px">Apple</div></div>
<div class="a" style="left:253px;top:153px;width:83px;height:16px;overflow:hidden"><div class="t" style="position:absolute;left:3px;top:3px;font-size:12px;color:#000;letter-spacing:0.1px">System 7.5</div></div>
<div class="a" style="left:337px;top:153px;width:83px;height:16px;overflow:hidden"><div class="t" style="position:absolute;left:3px;top:3px;font-size:12px;color:#000;letter-spacing:0.1px">Macintosh SE/30</div></div>
<div class="a" style="left:421px;top:153px;width:83px;height:16px;overflow:hidden"><div class="t" style="position:absolute;left:3px;top:3px;font-size:12px;color:#000;letter-spacing:0.1px">Macintosh</div></div>
<div class="a" style="left:505px;top:153px;width:83px;height:16px;overflow:hidden"><div class="t" style="position:absolute;left:3px;top:3px;font-size:12px;color:#000;letter-spacing:0.1px">S222</div></div>
<div class="a" style="left:589px;top:153px;width:83px;height:16px;overflow:hidden"><div class="t" style="position:absolute;left:3px;top:3px;font-size:12px;color:#000;letter-spacing:0.1px">129.116.224.16</div></div>
<div class="a" style="left:0;top:169px;width:673px;height:1px;background:#000"></div>
<div class="a" style="left:1px;top:170px;width:83px;height:16px;overflow:hidden"><div class="t" style="position:absolute;left:3px;top:3px;font-size:12px;color:#000;letter-spacing:0.1px">csdmac17</div></div>
<div class="a" style="left:169px;top:170px;width:83px;height:16px;overflow:hidden"><div class="t" style="position:absolute;left:3px;top:3px;font-size:12px;color:#000;letter-spacing:0.1px">Apple</div></div>
<div class="a" style="left:253px;top:170px;width:83px;height:16px;overflow:hidden"><div class="t" style="position:absolute;left:3px;top:3px;font-size:12px;color:#000;letter-spacing:0.1px">System 7.5</div></div>
<div class="a" style="left:337px;top:170px;width:83px;height:16px;overflow:hidden"><div class="t" style="position:absolute;left:3px;top:3px;font-size:12px;color:#000;letter-spacing:0.1px">Macintosh IIci</div></div>
<div class="a" style="left:421px;top:170px;width:83px;height:16px;overflow:hidden"><div class="t" style="position:absolute;left:3px;top:3px;font-size:12px;color:#000;letter-spacing:0.1px">Macintosh</div></div>
<div class="a" style="left:505px;top:170px;width:83px;height:16px;overflow:hidden"><div class="t" style="position:absolute;left:3px;top:3px;font-size:12px;color:#000;letter-spacing:0.1px">S222</div></div>
<div class="a" style="left:589px;top:170px;width:83px;height:16px;overflow:hidden"><div class="t" style="position:absolute;left:3px;top:3px;font-size:12px;color:#000;letter-spacing:0.1px">129.116.224.17</div></div>
<div class="a" style="left:0;top:186px;width:673px;height:1px;background:#000"></div>
<div class="a" style="left:1px;top:187px;width:83px;height:16px;overflow:hidden"><div class="t" style="position:absolute;left:3px;top:3px;font-size:12px;color:#000;letter-spacing:0.1px">csdmac18</div></div>
<div class="a" style="left:169px;top:187px;width:83px;height:16px;overflow:hidden"><div class="t" style="position:absolute;left:3px;top:3px;font-size:12px;color:#000;letter-spacing:0.1px">Apple</div></div>
<div class="a" style="left:253px;top:187px;width:83px;height:16px;overflow:hidden"><div class="t" style="position:absolute;left:3px;top:3px;font-size:12px;color:#000;letter-spacing:0.1px">System 8.1</div></div>
<div class="a" style="left:337px;top:187px;width:83px;height:16px;overflow:hidden"><div class="t" style="position:absolute;left:3px;top:3px;font-size:12px;color:#000;letter-spacing:0.1px">Performa 6214</div></div>
<div class="a" style="left:421px;top:187px;width:83px;height:16px;overflow:hidden"><div class="t" style="position:absolute;left:3px;top:3px;font-size:12px;color:#000;letter-spacing:0.1px">Macintosh</div></div>
<div class="a" style="left:505px;top:187px;width:83px;height:16px;overflow:hidden"><div class="t" style="position:absolute;left:3px;top:3px;font-size:12px;color:#000;letter-spacing:0.1px">S222</div></div>
<div class="a" style="left:589px;top:187px;width:83px;height:16px;overflow:hidden"><div class="t" style="position:absolute;left:3px;top:3px;font-size:12px;color:#000;letter-spacing:0.1px">129.116.224.17</div></div>
<div class="a" style="left:0;top:203px;width:673px;height:1px;background:#000"></div>
<div class="a" style="left:1px;top:204px;width:83px;height:16px;overflow:hidden"><div class="t" style="position:absolute;left:3px;top:3px;font-size:12px;color:#000;letter-spacing:0.1px">csdmac2</div></div>
<div class="a" style="left:169px;top:204px;width:83px;height:16px;overflow:hidden"><div class="t" style="position:absolute;left:3px;top:3px;font-size:12px;color:#000;letter-spacing:0.1px">Apple</div></div>
<div class="a" style="left:253px;top:204px;width:83px;height:16px;overflow:hidden"><div class="t" style="position:absolute;left:3px;top:3px;font-size:12px;color:#000;letter-spacing:0.1px">System 8.1</div></div>
<div class="a" style="left:337px;top:204px;width:83px;height:16px;overflow:hidden"><div class="t" style="position:absolute;left:3px;top:3px;font-size:12px;color:#000;letter-spacing:0.1px">Quadra 630</div></div>
<div class="a" style="left:421px;top:204px;width:83px;height:16px;overflow:hidden"><div class="t" style="position:absolute;left:3px;top:3px;font-size:12px;color:#000;letter-spacing:0.1px">Macintosh</div></div>
<div class="a" style="left:505px;top:204px;width:83px;height:16px;overflow:hidden"><div class="t" style="position:absolute;left:3px;top:3px;font-size:12px;color:#000;letter-spacing:0.1px">S222</div></div>
<div class="a" style="left:589px;top:204px;width:83px;height:16px;overflow:hidden"><div class="t" style="position:absolute;left:3px;top:3px;font-size:12px;color:#000;letter-spacing:0.1px">129.116.224.15</div></div>
<div class="a" style="left:0;top:220px;width:673px;height:1px;background:#000"></div>
<div class="a" style="left:1px;top:221px;width:83px;height:16px;overflow:hidden"><div class="t" style="position:absolute;left:3px;top:3px;font-size:12px;color:#000;letter-spacing:0.1px">csdmac216</div></div>
<div class="a" style="left:169px;top:221px;width:83px;height:16px;overflow:hidden"><div class="t" style="position:absolute;left:3px;top:3px;font-size:12px;color:#000;letter-spacing:0.1px">Cayman</div></div>
<div class="a" style="left:253px;top:221px;width:83px;height:16px;overflow:hidden"><div class="t" style="position:absolute;left:3px;top:3px;font-size:12px;color:#000;letter-spacing:0.1px">GatorShare 3.0</div></div>
<div class="a" style="left:337px;top:221px;width:83px;height:16px;overflow:hidden"><div class="t" style="position:absolute;left:3px;top:3px;font-size:12px;color:#000;letter-spacing:0.1px">GatorBox CS</div></div>
<div class="a" style="left:421px;top:221px;width:83px;height:16px;overflow:hidden"><div class="t" style="position:absolute;left:3px;top:3px;font-size:12px;color:#000;letter-spacing:0.1px">Gator Box</div></div>
<div class="a" style="left:505px;top:221px;width:83px;height:16px;overflow:hidden"><div class="t" style="position:absolute;left:3px;top:3px;font-size:12px;color:#000;letter-spacing:0.1px">S331</div></div>
<div class="a" style="left:589px;top:221px;width:83px;height:16px;overflow:hidden"><div class="t" style="position:absolute;left:3px;top:3px;font-size:12px;color:#000;letter-spacing:0.1px">129.116.224.21</div></div>
<div class="a" style="left:0;top:237px;width:673px;height:1px;background:#000"></div>
<div class="a" style="left:1px;top:238px;width:83px;height:16px;overflow:hidden"><div class="t" style="position:absolute;left:3px;top:3px;font-size:12px;color:#000;letter-spacing:0.1px">csdmac217</div></div>
<div class="a" style="left:169px;top:238px;width:83px;height:16px;overflow:hidden"><div class="t" style="position:absolute;left:3px;top:3px;font-size:12px;color:#000;letter-spacing:0.1px">Cayman</div></div>
<div class="a" style="left:253px;top:238px;width:83px;height:16px;overflow:hidden"><div class="t" style="position:absolute;left:3px;top:3px;font-size:12px;color:#000;letter-spacing:0.1px">GatorShare 3.0</div></div>
<div class="a" style="left:337px;top:238px;width:83px;height:16px;overflow:hidden"><div class="t" style="position:absolute;left:3px;top:3px;font-size:12px;color:#000;letter-spacing:0.1px">GatorBox CS</div></div>
<div class="a" style="left:421px;top:238px;width:83px;height:16px;overflow:hidden"><div class="t" style="position:absolute;left:3px;top:3px;font-size:12px;color:#000;letter-spacing:0.1px">Gator Box</div></div>
<div class="a" style="left:505px;top:238px;width:83px;height:16px;overflow:hidden"><div class="t" style="position:absolute;left:3px;top:3px;font-size:12px;color:#000;letter-spacing:0.1px">S331</div></div>
<div class="a" style="left:589px;top:238px;width:83px;height:16px;overflow:hidden"><div class="t" style="position:absolute;left:3px;top:3px;font-size:12px;color:#000;letter-spacing:0.1px">129.116.224.21</div></div>
<div class="a" style="left:0;top:254px;width:673px;height:1px;background:#000"></div>
<div class="a" style="left:1px;top:255px;width:83px;height:16px;overflow:hidden"><div class="t" style="position:absolute;left:3px;top:3px;font-size:12px;color:#000;letter-spacing:0.1px">csdmac218</div></div>
<div class="a" style="left:169px;top:255px;width:83px;height:16px;overflow:hidden"><div class="t" style="position:absolute;left:3px;top:3px;font-size:12px;color:#000;letter-spacing:0.1px">Cayman</div></div>
<div class="a" style="left:253px;top:255px;width:83px;height:16px;overflow:hidden"><div class="t" style="position:absolute;left:3px;top:3px;font-size:12px;color:#000;letter-spacing:0.1px">GatorShare 3.0</div></div>
<div class="a" style="left:337px;top:255px;width:83px;height:16px;overflow:hidden"><div class="t" style="position:absolute;left:3px;top:3px;font-size:12px;color:#000;letter-spacing:0.1px">GatorBox CS</div></div>
<div class="a" style="left:421px;top:255px;width:83px;height:16px;overflow:hidden"><div class="t" style="position:absolute;left:3px;top:3px;font-size:12px;color:#000;letter-spacing:0.1px">Gator Box</div></div>
<div class="a" style="left:505px;top:255px;width:83px;height:16px;overflow:hidden"><div class="t" style="position:absolute;left:3px;top:3px;font-size:12px;color:#000;letter-spacing:0.1px">S331</div></div>
<div class="a" style="left:589px;top:255px;width:83px;height:16px;overflow:hidden"><div class="t" style="position:absolute;left:3px;top:3px;font-size:12px;color:#000;letter-spacing:0.1px">129.116.224.21</div></div>
<div class="a" style="left:0;top:271px;width:673px;height:1px;background:#000"></div>
<div class="a" style="left:1px;top:272px;width:83px;height:16px;overflow:hidden"><div class="t" style="position:absolute;left:3px;top:3px;font-size:12px;color:#000;letter-spacing:0.1px">csdmac233</div></div>
<div class="a" style="left:169px;top:272px;width:83px;height:16px;overflow:hidden"><div class="t" style="position:absolute;left:3px;top:3px;font-size:12px;color:#000;letter-spacing:0.1px">Cayman</div></div>
<div class="a" style="left:253px;top:272px;width:83px;height:16px;overflow:hidden"><div class="t" style="position:absolute;left:3px;top:3px;font-size:12px;color:#000;letter-spacing:0.1px">Gateway</div></div>
<div class="a" style="left:337px;top:272px;width:83px;height:16px;overflow:hidden"><div class="t" style="position:absolute;left:3px;top:3px;font-size:12px;color:#000;letter-spacing:0.1px">5.0</div></div>
<div class="a" style="left:421px;top:272px;width:83px;height:16px;overflow:hidden"><div class="t" style="position:absolute;left:3px;top:3px;font-size:12px;color:#000;letter-spacing:0.1px">Gator Box</div></div>
<div class="a" style="left:505px;top:272px;width:83px;height:16px;overflow:hidden"><div class="t" style="position:absolute;left:3px;top:3px;font-size:12px;color:#000;letter-spacing:0.1px">S222</div></div>
<div class="a" style="left:589px;top:272px;width:83px;height:16px;overflow:hidden"><div class="t" style="position:absolute;left:3px;top:3px;font-size:12px;color:#000;letter-spacing:0.1px">129.116.224.23</div></div>
<div class="a" style="left:0;top:288px;width:673px;height:1px;background:#000"></div>
<div class="a" style="left:1px;top:289px;width:83px;height:16px;overflow:hidden"><div class="t" style="position:absolute;left:3px;top:3px;font-size:12px;color:#000;letter-spacing:0.1px">csdmac234</div></div>
<div class="a" style="left:169px;top:289px;width:83px;height:16px;overflow:hidden"><div class="t" style="position:absolute;left:3px;top:3px;font-size:12px;color:#000;letter-spacing:0.1px">Cayman</div></div>
<div class="a" style="left:253px;top:289px;width:83px;height:16px;overflow:hidden"><div class="t" style="position:absolute;left:3px;top:3px;font-size:12px;color:#000;letter-spacing:0.1px">Gateway</div></div>
<div class="a" style="left:337px;top:289px;width:83px;height:16px;overflow:hidden"><div class="t" style="position:absolute;left:3px;top:3px;font-size:12px;color:#000;letter-spacing:0.1px">5.0</div></div>
<div class="a" style="left:421px;top:289px;width:83px;height:16px;overflow:hidden"><div class="t" style="position:absolute;left:3px;top:3px;font-size:12px;color:#000;letter-spacing:0.1px">Gator Box</div></div>
<div class="a" style="left:505px;top:289px;width:83px;height:16px;overflow:hidden"><div class="t" style="position:absolute;left:3px;top:3px;font-size:12px;color:#000;letter-spacing:0.1px">S222</div></div>
<div class="a" style="left:589px;top:289px;width:83px;height:16px;overflow:hidden"><div class="t" style="position:absolute;left:3px;top:3px;font-size:12px;color:#000;letter-spacing:0.1px">129.116.224.23</div></div>
<div class="a" style="left:0;top:305px;width:673px;height:1px;background:#000"></div>
<div class="a" style="left:1px;top:306px;width:83px;height:16px;overflow:hidden"><div class="t" style="position:absolute;left:3px;top:3px;font-size:12px;color:#000;letter-spacing:0.1px">csdmac235</div></div>
<div class="a" style="left:169px;top:306px;width:83px;height:16px;overflow:hidden"><div class="t" style="position:absolute;left:3px;top:3px;font-size:12px;color:#000;letter-spacing:0.1px">Cayman</div></div>
<div class="a" style="left:253px;top:306px;width:83px;height:16px;overflow:hidden"><div class="t" style="position:absolute;left:3px;top:3px;font-size:12px;color:#000;letter-spacing:0.1px">Gateway</div></div>
<div class="a" style="left:337px;top:306px;width:83px;height:16px;overflow:hidden"><div class="t" style="position:absolute;left:3px;top:3px;font-size:12px;color:#000;letter-spacing:0.1px">5.0</div></div>
<div class="a" style="left:421px;top:306px;width:83px;height:16px;overflow:hidden"><div class="t" style="position:absolute;left:3px;top:3px;font-size:12px;color:#000;letter-spacing:0.1px">Gator Box</div></div>
<div class="a" style="left:505px;top:306px;width:83px;height:16px;overflow:hidden"><div class="t" style="position:absolute;left:3px;top:3px;font-size:12px;color:#000;letter-spacing:0.1px">S222</div></div>
<div class="a" style="left:589px;top:306px;width:83px;height:16px;overflow:hidden"><div class="t" style="position:absolute;left:3px;top:3px;font-size:12px;color:#000;letter-spacing:0.1px">129.116.224.23</div></div>
<div class="a" style="left:0;top:322px;width:673px;height:1px;background:#000"></div>
<div class="a" style="left:1px;top:323px;width:83px;height:16px;overflow:hidden"><div class="t" style="position:absolute;left:3px;top:3px;font-size:12px;color:#000;letter-spacing:0.1px">csdmac236</div></div>
<div class="a" style="left:169px;top:323px;width:83px;height:16px;overflow:hidden"><div class="t" style="position:absolute;left:3px;top:3px;font-size:12px;color:#000;letter-spacing:0.1px">Cayman</div></div>
<div class="a" style="left:253px;top:323px;width:83px;height:16px;overflow:hidden"><div class="t" style="position:absolute;left:3px;top:3px;font-size:12px;color:#000;letter-spacing:0.1px">Gateway</div></div>
<div class="a" style="left:337px;top:323px;width:83px;height:16px;overflow:hidden"><div class="t" style="position:absolute;left:3px;top:3px;font-size:12px;color:#000;letter-spacing:0.1px">5.0</div></div>
<div class="a" style="left:421px;top:323px;width:83px;height:16px;overflow:hidden"><div class="t" style="position:absolute;left:3px;top:3px;font-size:12px;color:#000;letter-spacing:0.1px">Gator Box</div></div>
<div class="a" style="left:505px;top:323px;width:83px;height:16px;overflow:hidden"><div class="t" style="position:absolute;left:3px;top:3px;font-size:12px;color:#000;letter-spacing:0.1px">S222</div></div>
<div class="a" style="left:589px;top:323px;width:83px;height:16px;overflow:hidden"><div class="t" style="position:absolute;left:3px;top:3px;font-size:12px;color:#000;letter-spacing:0.1px">129.116.224.23</div></div>
<div class="a" style="left:0;top:339px;width:673px;height:1px;background:#000"></div>
<div class="a" style="left:1px;top:340px;width:83px;height:16px;overflow:hidden"><div class="t" style="position:absolute;left:3px;top:3px;font-size:12px;color:#000;letter-spacing:0.1px">csdmac3</div></div>
<div class="a" style="left:169px;top:340px;width:83px;height:16px;overflow:hidden"><div class="t" style="position:absolute;left:3px;top:3px;font-size:12px;color:#000;letter-spacing:0.1px">Apple</div></div>
<div class="a" style="left:253px;top:340px;width:83px;height:16px;overflow:hidden"><div class="t" style="position:absolute;left:3px;top:3px;font-size:12px;color:#000;letter-spacing:0.1px">System 8.1</div></div>
<div class="a" style="left:337px;top:340px;width:83px;height:16px;overflow:hidden"><div class="t" style="position:absolute;left:3px;top:3px;font-size:12px;color:#000;letter-spacing:0.1px">Quadra 610</div></div>
<div class="a" style="left:421px;top:340px;width:83px;height:16px;overflow:hidden"><div class="t" style="position:absolute;left:3px;top:3px;font-size:12px;color:#000;letter-spacing:0.1px">Macintosh</div></div>
<div class="a" style="left:505px;top:340px;width:83px;height:16px;overflow:hidden"><div class="t" style="position:absolute;left:3px;top:3px;font-size:12px;color:#000;letter-spacing:0.1px">S323</div></div>
<div class="a" style="left:589px;top:340px;width:83px;height:16px;overflow:hidden"><div class="t" style="position:absolute;left:3px;top:3px;font-size:12px;color:#000;letter-spacing:0.1px">129.116.224.15</div></div>
<div class="a" style="left:0;top:356px;width:673px;height:1px;background:#000"></div>
<div class="a" style="left:1px;top:357px;width:83px;height:16px;overflow:hidden"><div class="t" style="position:absolute;left:3px;top:3px;font-size:12px;color:#000;letter-spacing:0.1px">csdmac4</div></div>
<div class="a" style="left:169px;top:357px;width:83px;height:16px;overflow:hidden"><div class="t" style="position:absolute;left:3px;top:3px;font-size:12px;color:#000;letter-spacing:0.1px">Apple</div></div>
<div class="a" style="left:253px;top:357px;width:83px;height:16px;overflow:hidden"><div class="t" style="position:absolute;left:3px;top:3px;font-size:12px;color:#000;letter-spacing:0.1px">System 7.5</div></div>
<div class="a" style="left:337px;top:357px;width:83px;height:16px;overflow:hidden"><div class="t" style="position:absolute;left:3px;top:3px;font-size:12px;color:#000;letter-spacing:0.1px">Macintosh IIci</div></div>
<div class="a" style="left:421px;top:357px;width:83px;height:16px;overflow:hidden"><div class="t" style="position:absolute;left:3px;top:3px;font-size:12px;color:#000;letter-spacing:0.1px">Macintosh</div></div>
<div class="a" style="left:505px;top:357px;width:83px;height:16px;overflow:hidden"><div class="t" style="position:absolute;left:3px;top:3px;font-size:12px;color:#000;letter-spacing:0.1px">S222</div></div>
<div class="a" style="left:589px;top:357px;width:83px;height:16px;overflow:hidden"><div class="t" style="position:absolute;left:3px;top:3px;font-size:12px;color:#000;letter-spacing:0.1px">129.116.224.15</div></div>
<div class="a" style="left:0;top:373px;width:673px;height:1px;background:#000"></div>
<div class="a" style="left:1px;top:374px;width:83px;height:16px;overflow:hidden"><div class="t" style="position:absolute;left:3px;top:3px;font-size:12px;color:#000;letter-spacing:0.1px">csdmac5</div></div>
<div class="a" style="left:169px;top:374px;width:83px;height:16px;overflow:hidden"><div class="t" style="position:absolute;left:3px;top:3px;font-size:12px;color:#000;letter-spacing:0.1px">Apple</div></div>
<div class="a" style="left:253px;top:374px;width:83px;height:16px;overflow:hidden"><div class="t" style="position:absolute;left:3px;top:3px;font-size:12px;color:#000;letter-spacing:0.1px">System 7.5</div></div>
<div class="a" style="left:337px;top:374px;width:83px;height:16px;overflow:hidden"><div class="t" style="position:absolute;left:3px;top:3px;font-size:12px;color:#000;letter-spacing:0.1px">Quadra 630</div></div>
<div class="a" style="left:421px;top:374px;width:83px;height:16px;overflow:hidden"><div class="t" style="position:absolute;left:3px;top:3px;font-size:12px;color:#000;letter-spacing:0.1px">Macintosh</div></div>
<div class="a" style="left:505px;top:374px;width:83px;height:16px;overflow:hidden"><div class="t" style="position:absolute;left:3px;top:3px;font-size:12px;color:#000;letter-spacing:0.1px">S222</div></div>
<div class="a" style="left:589px;top:374px;width:83px;height:16px;overflow:hidden"><div class="t" style="position:absolute;left:3px;top:3px;font-size:12px;color:#000;letter-spacing:0.1px">129.116.224.15</div></div>
<div class="a" style="left:0;top:390px;width:673px;height:1px;background:#000"></div>
<div class="a" style="left:1px;top:391px;width:83px;height:16px;overflow:hidden"><div class="t" style="position:absolute;left:3px;top:3px;font-size:12px;color:#000;letter-spacing:0.1px">csdmac6</div></div>
<div class="a" style="left:169px;top:391px;width:83px;height:16px;overflow:hidden"><div class="t" style="position:absolute;left:3px;top:3px;font-size:12px;color:#000;letter-spacing:0.1px">Apple</div></div>
<div class="a" style="left:253px;top:391px;width:83px;height:16px;overflow:hidden"><div class="t" style="position:absolute;left:3px;top:3px;font-size:12px;color:#000;letter-spacing:0.1px">System 7.6</div></div>
<div class="a" style="left:337px;top:391px;width:83px;height:16px;overflow:hidden"><div class="t" style="position:absolute;left:3px;top:3px;font-size:12px;color:#000;letter-spacing:0.1px">Macinosh IIci</div></div>
<div class="a" style="left:421px;top:391px;width:83px;height:16px;overflow:hidden"><div class="t" style="position:absolute;left:3px;top:3px;font-size:12px;color:#000;letter-spacing:0.1px">Macintosh</div></div>
<div class="a" style="left:505px;top:391px;width:83px;height:16px;overflow:hidden"><div class="t" style="position:absolute;left:3px;top:3px;font-size:12px;color:#000;letter-spacing:0.1px">S329</div></div>
<div class="a" style="left:589px;top:391px;width:83px;height:16px;overflow:hidden"><div class="t" style="position:absolute;left:3px;top:3px;font-size:12px;color:#000;letter-spacing:0.1px">129.116.224.15</div></div>
<div class="a" style="left:0;top:407px;width:673px;height:1px;background:#000"></div>
<div class="a" style="left:1px;top:408px;width:83px;height:16px;overflow:hidden"><div class="t" style="position:absolute;left:3px;top:3px;font-size:12px;color:#000;letter-spacing:0.1px">csdmac7</div></div>
<div class="a" style="left:169px;top:408px;width:83px;height:16px;overflow:hidden"><div class="t" style="position:absolute;left:3px;top:3px;font-size:12px;color:#000;letter-spacing:0.1px">Apple</div></div>
<div class="a" style="left:253px;top:408px;width:83px;height:16px;overflow:hidden"><div class="t" style="position:absolute;left:3px;top:3px;font-size:12px;color:#000;letter-spacing:0.1px">System 7.5</div></div>
<div class="a" style="left:337px;top:408px;width:83px;height:16px;overflow:hidden"><div class="t" style="position:absolute;left:3px;top:3px;font-size:12px;color:#000;letter-spacing:0.1px">Macintosh IIci</div></div>
<div class="a" style="left:421px;top:408px;width:83px;height:16px;overflow:hidden"><div class="t" style="position:absolute;left:3px;top:3px;font-size:12px;color:#000;letter-spacing:0.1px">Macintosh</div></div>
<div class="a" style="left:505px;top:408px;width:83px;height:16px;overflow:hidden"><div class="t" style="position:absolute;left:3px;top:3px;font-size:12px;color:#000;letter-spacing:0.1px">S228</div></div>
<div class="a" style="left:589px;top:408px;width:83px;height:16px;overflow:hidden"><div class="t" style="position:absolute;left:3px;top:3px;font-size:12px;color:#000;letter-spacing:0.1px">129.116.224.15</div></div>
<div class="a" style="left:0;top:424px;width:673px;height:1px;background:#000"></div>
<div class="a" style="left:1px;top:425px;width:83px;height:16px;overflow:hidden"><div class="t" style="position:absolute;left:3px;top:3px;font-size:12px;color:#000;letter-spacing:0.1px">csdmac8</div></div>
<div class="a" style="left:169px;top:425px;width:83px;height:16px;overflow:hidden"><div class="t" style="position:absolute;left:3px;top:3px;font-size:12px;color:#000;letter-spacing:0.1px">Apple</div></div>
<div class="a" style="left:253px;top:425px;width:83px;height:16px;overflow:hidden"><div class="t" style="position:absolute;left:3px;top:3px;font-size:12px;color:#000;letter-spacing:0.1px">System 7.1</div></div>
<div class="a" style="left:337px;top:425px;width:83px;height:16px;overflow:hidden"><div class="t" style="position:absolute;left:3px;top:3px;font-size:12px;color:#000;letter-spacing:0.1px">Macintosh IIci</div></div>
<div class="a" style="left:421px;top:425px;width:83px;height:16px;overflow:hidden"><div class="t" style="position:absolute;left:3px;top:3px;font-size:12px;color:#000;letter-spacing:0.1px">Macintosh</div></div>
<div class="a" style="left:505px;top:425px;width:83px;height:16px;overflow:hidden"><div class="t" style="position:absolute;left:3px;top:3px;font-size:12px;color:#000;letter-spacing:0.1px">S222</div></div>
<div class="a" style="left:589px;top:425px;width:83px;height:16px;overflow:hidden"><div class="t" style="position:absolute;left:3px;top:3px;font-size:12px;color:#000;letter-spacing:0.1px">129.116.224.19</div></div>
<div class="a" style="left:0;top:441px;width:673px;height:1px;background:#000"></div>
<div class="a" style="left:0px;top:0;width:1px;height:433px;background:#000"></div>
<div class="a" style="left:84px;top:0;width:1px;height:433px;background:#000"></div>
<div class="a" style="left:168px;top:0;width:1px;height:433px;background:#000"></div>
<div class="a" style="left:252px;top:0;width:1px;height:433px;background:#000"></div>
<div class="a" style="left:336px;top:0;width:1px;height:433px;background:#000"></div>
<div class="a" style="left:420px;top:0;width:1px;height:433px;background:#000"></div>
<div class="a" style="left:504px;top:0;width:1px;height:433px;background:#000"></div>
<div class="a" style="left:588px;top:0;width:1px;height:433px;background:#000"></div>
<div class="a" style="left:672px;top:0;width:1px;height:433px;background:#000"></div>
</div>
<div class="a" style="left:910px;top:192px;width:1px;height:455px;background:#666666;"></div>
<div class="a" style="left:911px;top:192px;width:16px;height:455px;background:#cccccc;"></div>
<div class="a" style="left:926px;top:192px;width:1px;height:455px;background:#777777;"></div>
<div class="a" style="left:911px;top:192px;width:16px;height:16px;background:#d4d4d4;box-shadow:inset 0 1px #666,inset 1px 2px #fff,inset -1px -1px #666"></div>
<svg class="a" style="left:915px;top:197px" width="9" height="6"><path d="M0.5 5 L4.5 0.5 L8.5 5Z" fill="#000"/></svg>
<div class="a" style="left:911px;top:208px;width:16px;height:131px;background:#666699;"></div>
<div class="a" style="left:912px;top:209px;width:14px;height:129px;background:#9999cc;"></div>
<div class="a" style="left:912px;top:209px;width:14px;height:1px;background:#ccccff;"></div>
<div class="a" style="left:912px;top:209px;width:1px;height:129px;background:#ccccff;"></div>
<svg class="a" style="left:914px;top:212px" width="10" height="124"><defs><pattern id="bumpS" x="0" y="0" width="4" height="4" patternUnits="userSpaceOnUse"><rect x="0" y="0" width="1" height="1" fill="#ccccff"/><rect x="1" y="1" width="1" height="1" fill="#666699"/><rect x="2" y="2" width="1" height="1" fill="#ccccff"/><rect x="3" y="3" width="1" height="1" fill="#666699"/></pattern></defs><rect width="10" height="124" fill="url(#bumpS)"/></svg>
<div class="a" style="left:911px;top:630px;width:16px;height:16px;background:#d4d4d4;box-shadow:inset 0 1px #666,inset 1px 2px #fff,inset -1px -1px #666"></div>
<svg class="a" style="left:915px;top:636px" width="9" height="6"><path d="M0.5 0.5 L8.5 0.5 L4.5 5Z" fill="#000"/></svg>
<div class="a" style="left:927px;top:192px;width:1px;height:455px;background:#fff;"></div>
<div class="a" style="left:237px;top:646px;width:691px;height:1px;background:#fff;"></div>
<div class="a" style="left:336px;top:320px;width:99px;height:47px;background:#ccc;border:1px solid #666699;box-shadow:inset 1px 1px #fff"></div>
<div class="a" style="left:337px;top:344px;width:97px;height:21px;background:#9999cc;"></div>
<div class="a t" style="left:355px;top:328px;font-size:12px;font-weight:700;color:#000;-webkit-text-stroke:0.25px #000;">View Entry</div>
<div class="a t" style="left:355px;top:350px;font-size:12px;font-weight:700;color:#000;-webkit-text-stroke:0.25px #000;">Edit Entry</div>
<svg class="a" style="left:364px;top:344px" width="14" height="22"><path d="M0.5 0.5 L0.5 16 L4 12.5 L7 19.5 L9.5 18.5 L6.5 11.5 L11.5 11.5 Z" fill="#fff" stroke="#000" stroke-width="1"/></svg>
<div class="a" style="left:933px;top:111px;width:1px;height:542px;background:#ffffff;"></div>
<div class="a" style="left:223px;top:652px;width:711px;height:2px;background:#ffffff;"></div>
<div class="a" style="left:4px;top:654px;width:929px;height:1px;background:#5a5a5a;"></div>
<div class="a" style="left:5px;top:654px;width:56px;height:39px;border-left:1px solid #666;border-top:1px solid #666;border-right:1px solid #fff;border-bottom:1px solid #fff"></div>
<div class="a" style="left:61px;top:654px;width:703px;height:39px;border-left:1px solid #666;border-top:1px solid #666;border-right:1px solid #fff;border-bottom:1px solid #fff"></div>
<div class="a" style="left:764px;top:654px;width:169px;height:39px;border-left:1px solid #666;border-top:1px solid #666;border-right:1px solid #fff;border-bottom:1px solid #fff"></div>
<div class="a t" style="left:10px;top:668px;font-size:12px;font-weight:700;color:#666699;-webkit-text-stroke:0.25px #666699;">Status:</div>
<div class="a" style="left:770px;top:660px;width:79px;height:26px;border:1px solid #999;box-shadow:inset 1px 1px #e0e0e0"></div>
<div class="a t" style="left:770px;top:668px;width:79px;text-align:center;font-size:12px;font-weight:700;color:#a0a0a0">Commit</div>
<div class="a" style="left:854px;top:660px;width:73px;height:26px;border:1px solid #999;box-shadow:inset 1px 1px #e0e0e0"></div>
<div class="a t" style="left:854px;top:668px;width:73px;text-align:center;font-size:12px;font-weight:700;color:#a0a0a0">Cancel</div>
<div class="a" style="left:5px;top:697px;width:928px;height:18px;background:#ffffff;"></div>
<div class="a" style="left:5px;top:697px;width:927px;height:17px;background:#000;"></div>
<div class="a" style="left:6px;top:698px;width:926px;height:16px;background:#ffdd00;"></div>
<div class="a t" style="left:6px;top:702px;font-size:11px;font-weight:400;color:#000;">Warning: Applet Window</div>
</body></html>
